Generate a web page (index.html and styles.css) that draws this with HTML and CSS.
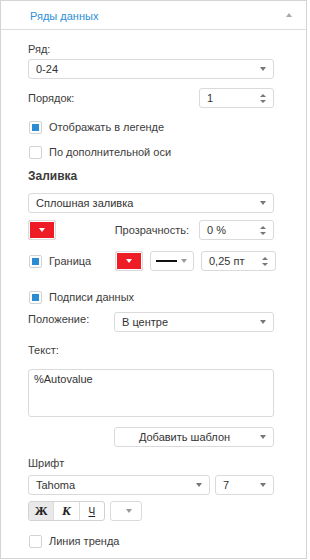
FILE: index.html
```html
<!DOCTYPE html>
<html lang="ru">
<head>
    <meta charset="UTF-8">
    <title>Ряды данных</title>
    <link rel="stylesheet" href="styles.css">
</head>
<body>

    <div class="panel">
        <!-- Header -->
        <div class="panel-head">
            <span class="panel-title">Ряды данных</span>
            <i class="caret-up"></i>
        </div>

        <div class="panel-body">
            <div class="line mt-9">Ряд:</div>
            <div class="field select"><span>0-24</span><i class="caret"></i></div>

            <div class="row mt-9">
                <span class="label">Порядок:</span>
                <div class="field spin w-75"><span>1</span><i class="arrows"></i></div>
            </div>

            <div class="check-row mt-9"><i class="check on"></i>Отображать в легенде</div>
            <div class="check-row mt-5"><i class="check"></i>По дополнительной оси</div>

            <div class="line bold mt-4">Заливка</div>
            <div class="field select mt-7"><span>Сплошная заливка</span><i class="caret"></i></div>

            <div class="row mt-7">
                <div class="color"><i class="caret white"></i></div>
                <span class="label push">Прозрачность:</span>
                <div class="field spin w-75"><span>0 %</span><i class="arrows"></i></div>
            </div>

            <div class="row gap-7 mt-11">
                <div class="check-row col-79"><i class="check on"></i>Граница</div>
                <div class="color"><i class="caret white"></i></div>
                <div class="field line-dd"><i class="stroke"></i><i class="caret"></i></div>
                <div class="field spin w-75"><span>0,25 пт</span><i class="arrows"></i></div>
            </div>

            <div class="check-row mt-16"><i class="check on"></i>Подписи данных</div>

            <div class="row top mt-5">
                <span class="label col-86">Положение:</span>
                <div class="field select grow"><span>В центре</span><i class="caret"></i></div>
            </div>

            <div class="line mt-8">Текст:</div>
            <div class="textarea mt-9">%Autovalue</div>

            <div class="row mt-10">
                <div class="field button"><span>Добавить шаблон</span><i class="caret"></i></div>
            </div>

            <div class="line mt-6">Шрифт</div>
            <div class="row gap-5 mt-2">
                <div class="field select w-182"><span>Tahoma</span><i class="caret"></i></div>
                <div class="field select grow"><span>7</span><i class="caret"></i></div>
            </div>

            <div class="row gap-5 mt-6">
                <div class="btn-group">
                    <span class="seg pressed b">Ж</span>
                    <span class="seg i">К</span>
                    <span class="seg u">Ч</span>
                </div>
                <div class="field color-dd"><i class="caret"></i></div>
            </div>

            <div class="check-row mt-10"><i class="check"></i>Линия тренда</div>
        </div>
    </div>

</body>
</html>
```

FILE: styles.css
```css
body {
    margin: 0;
    padding: 0;
    font-family: "Liberation Sans", Arial, sans-serif;
    font-size: 11px;
    color: #3c3c3c;
    background-color: #fff;
}

.panel {
    box-sizing: border-box;
    width: 307px;
    height: 559px;
    border: 1px solid #d4d4d4;
    background-color: #fff;
}

/* Header */
.panel-head {
    height: 28px;
    border-bottom: 1px solid #dcdcdc;
    display: flex;
    align-items: center;
    justify-content: space-between;
    padding: 0 14px 0 29px;
}

.panel-title {
    color: #2d8fd6;
    font-size: 11px;
    padding-top: 2px;
}

.caret-up {
    width: 0;
    height: 0;
    border-left: 3px solid transparent;
    border-right: 3px solid transparent;
    border-bottom: 4px solid #a8a8a8;
}

.panel-body {
    padding: 0 32px 0 27px;
}

/* Text lines */
.line {
    height: 20px;
    line-height: 20px;
}

.bold {
    font-weight: bold;
    font-size: 12px;
}

.label {
    white-space: nowrap;
}

/* Rows */
.row {
    display: flex;
    align-items: center;
    justify-content: space-between;
    height: 20px;
}

.row.top {
    align-items: flex-start;
}

.row.top .label {
    line-height: 14px;
}

.gap-7 { gap: 7px; justify-content: flex-start; }
.gap-5 { gap: 5px; justify-content: flex-start; }

.push {
    margin-left: auto;
    margin-right: 10px;
}

.col-86 {
    width: 86px;
    flex: none;
}

.col-79 {
    width: 79px;
    flex: none;
}

.grow { flex: 1; }
.w-75 { width: 75px; flex: none; }
.w-182 { width: 182px; flex: none; }

/* Inputs */
.field {
    box-sizing: border-box;
    height: 20px;
    border: 1px solid #dadada;
    border-radius: 3px;
    background-color: #fff;
    display: flex;
    align-items: center;
    justify-content: space-between;
    padding: 0 7px 0 7px;
    color: #333;
}

.select span,
.spin span {
    white-space: nowrap;
}

.caret {
    width: 0;
    height: 0;
    border-left: 3px solid transparent;
    border-right: 3px solid transparent;
    border-top: 4px solid #777;
}

.caret.white {
    border-top-color: #fff;
}

.arrows {
    display: flex;
    flex-direction: column;
    gap: 3px;
}

.arrows::before,
.arrows::after {
    content: "";
    width: 0;
    height: 0;
    border-left: 3px solid transparent;
    border-right: 3px solid transparent;
}

.arrows::before {
    border-bottom: 3px solid #777;
}

.arrows::after {
    border-top: 3px solid #777;
}

/* Checkboxes */
.check-row {
    display: flex;
    align-items: center;
    height: 20px;
    gap: 7px;
    padding-left: 1px;
}

.check {
    box-sizing: border-box;
    width: 13px;
    height: 13px;
    border: 1px solid #d2d2d2;
    border-radius: 2px;
    background-color: #fff;
    display: flex;
    align-items: center;
    justify-content: center;
}

.check.on::after {
    content: "";
    width: 7px;
    height: 7px;
    background-color: #2b8bd3;
}

/* Colour pickers */
.color {
    box-sizing: border-box;
    width: 28px;
    height: 20px;
    border: 1px solid #dcdcdc;
    border-radius: 2px;
    background-color: #ee1c25;
    box-shadow: inset 0 0 0 1px #fff;
    display: flex;
    align-items: center;
    justify-content: center;
    flex: none;
}

.line-dd {
    width: 44px;
    flex: none;
    padding: 0 6px 0 5px;
}

.stroke {
    width: 21px;
    height: 2px;
    background-color: #111;
}

.line-dd .caret,
.color-dd .caret {
    border-top-color: #999;
}

.color-dd {
    width: 32px;
    justify-content: flex-end;
    padding-right: 9px;
}

/* Text area */
.textarea {
    box-sizing: border-box;
    height: 48px;
    border: 1px solid #dadada;
    border-radius: 3px;
    padding: 3px 5px;
    color: #333;
}

.button {
    width: 160px;
    margin-left: auto;
    padding: 0 7px 0 0;
}

.button span {
    flex: 1;
    text-align: center;
    margin-right: 6px;
    white-space: nowrap;
}

/* Bold / italic / underline */
.btn-group {
    box-sizing: border-box;
    display: flex;
    width: 77px;
    height: 20px;
    border: 1px solid #d2d2d2;
    border-radius: 3px;
    overflow: hidden;
}

.seg {
    flex: 1;
    display: flex;
    align-items: center;
    justify-content: center;
    border-left: 1px solid #dcdcdc;
    color: #222;
}

.seg:first-child {
    border-left: none;
}

.seg.pressed {
    background-color: #e9e9e9;
}

.seg.b {
    font-family: "Liberation Serif", serif;
    font-weight: bold;
    font-size: 13px;
}

.seg.i {
    font-family: "Liberation Serif", serif;
    font-style: italic;
    font-weight: bold;
    font-size: 13px;
}

.seg.u {
    font-size: 10px;
    text-decoration: underline;
}

/* Spacing */
.mt-2 { margin-top: 2px; }
.mt-4 { margin-top: 4px; }
.mt-5 { margin-top: 5px; }
.mt-6 { margin-top: 6px; }
.mt-7 { margin-top: 7px; }
.mt-8 { margin-top: 8px; }
.mt-9 { margin-top: 9px; }
.mt-10 { margin-top: 10px; }
.mt-11 { margin-top: 11px; }
.mt-16 { margin-top: 16px; }
```
